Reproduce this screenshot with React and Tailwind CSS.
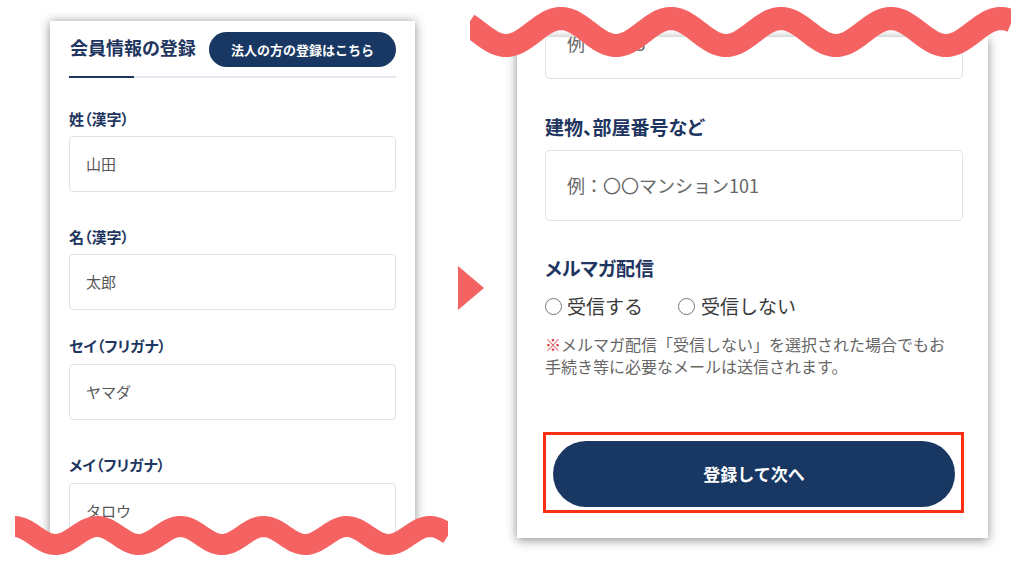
const LEFT_FIELDS = [
  { label: "姓（漢字）", value: "山田", gap: "mt-[31px]", inGap: "mt-[7px]" },
  { label: "名（漢字）", value: "太郎", gap: "mt-[35px]", inGap: "mt-[7px]" },
  { label: "セイ（フリガナ）", value: "ヤマダ", gap: "mt-[26px]", inGap: "mt-[8px]" },
  { label: "メイ（フリガナ）", value: "タロウ", gap: "mt-[35px]", inGap: "mt-[8px]" },
];

// sine wave used for the "cut" marks
function wavePoints(width, mid, amp, period, x0) {
  let d = "";
  for (let x = -2; x <= width + 2; x += 2) {
    const y = mid - amp * Math.cos((2 * Math.PI * (x - x0)) / period);
    d += (d ? " L" : "M") + x.toFixed(1) + " " + y.toFixed(2);
  }
  return d;
}

function Wave({ className, width, height, mid, amp, period, x0, stroke, side }) {
  const line = wavePoints(width, mid, amp, period, x0);
  const edge = side === "below" ? height + 2 : -2;
  const fill = `${line} L${width + 2} ${edge} L-2 ${edge} Z`;
  return (
    <svg className={className} width={width} height={height} viewBox={`0 0 ${width} ${height}`}>
      <path d={fill} fill="#ffffff" />
      <path d={line} fill="none" stroke="#f56262" strokeWidth={stroke} />
    </svg>
  );
}

export default function App() {
  return (
    <div className="w-[1024px] h-[576px] overflow-hidden bg-white flex items-start font-['Noto_Sans_CJK_JP',sans-serif]">
      {/* ── Left: form start ───────────────────────────────────── */}
      <div className="relative ml-[15px] w-[433px] h-[576px] shrink-0">
        <div className="mt-[21px] ml-[35px] w-[365px] h-[540px] overflow-hidden bg-white shadow-[0_1px_10px_rgba(0,0,0,0.45)] px-[19px] pt-[11px]">
          <div className="flex items-center justify-between">
            <h1 className="pl-px pb-[6px] text-[18px] leading-[26px] font-bold text-[#1e3560] [font-feature-settings:'palt']">
              会員情報の登録
            </h1>
            <button className="w-[187px] h-[35px] rounded-full bg-[#183863] text-white text-[13px] font-bold">
              法人の方の登録はこちら
            </button>
          </div>
          <div className="mt-[9px] flex h-[2px]">
            <div className="w-[65px] bg-[#1e3560]" />
            <div className="flex-1 bg-[#e4e8ee]" />
          </div>
          {LEFT_FIELDS.map((f) => (
            <div key={f.label} className={f.gap}>
              <div className="text-[15px] leading-[20px] font-bold text-[#1e3560] [font-feature-settings:'palt']">
                {f.label}
              </div>
              <div
                className={`${f.inGap} h-[56px] rounded-[4px] border border-[#dde3ea] flex items-center pl-[16px] text-[15px] text-[#555]`}
              >
                {f.value}
              </div>
            </div>
          ))}
        </div>
        <Wave
          className="absolute left-0 top-[500px]"
          width={433}
          height={76}
          mid={35.5}
          amp={9}
          period={83.2}
          x0={-1}
          stroke={21}
          side="below"
        />
      </div>

      {/* ── Arrow ──────────────────────────────────────────────── */}
      <div className="ml-[10px] mt-[266px] w-[26px] h-[44px] shrink-0">
        <svg width="26" height="44" viewBox="0 0 26 44">
          <polygon points="0,0 26,22 0,44" fill="#f56262" />
        </svg>
      </div>

      {/* ── Right: form end ────────────────────────────────────── */}
      <div className="relative w-[527px] h-[576px] shrink-0">
        <div className="mt-[37px] ml-[33px] w-[471px] overflow-hidden bg-white shadow-[0_2px_10px_rgba(0,0,0,0.45)] pl-[28px] pr-[25px] pb-[25px]">
          <div className="-mt-[29px] h-[71px] rounded-[5px] border border-[#dde3ea] flex items-center pl-[21px] text-[18px] text-[#666]">
            例：1-2-3
          </div>

          <div className="mt-[35px] text-[19px] leading-[26px] font-bold text-[#1e3560] [font-feature-settings:'palt']">
            建物、部屋番号など
          </div>
          <div className="mt-[10px] h-[71px] rounded-[5px] border border-[#dde3ea] flex items-center pl-[21px] text-[18px] text-[#666]">
            例：〇〇マンション101
          </div>

          <div className="mt-[34px] text-[19px] leading-[26px] font-bold text-[#1e3560] [font-feature-settings:'palt']">
            メルマガ配信
          </div>
          <div className="mt-[12px] h-[26px] flex items-center text-[19px] text-[#3a3a3a]">
            <label className="flex items-center">
              <span className="w-[17px] h-[17px] rounded-full border-[1.5px] border-[#7a7a7a]" />
              <span className="ml-[5px]">受信する</span>
            </label>
            <label className="ml-[35px] flex items-center">
              <span className="w-[17px] h-[17px] rounded-full border-[1.5px] border-[#7a7a7a]" />
              <span className="ml-[6px]">受信しない</span>
            </label>
          </div>
          <p className="mt-[14px] text-[16px] leading-[22px] text-[#666]">
            <span className="text-[#e2343c]">※</span>メルマガ配信「受信しない」を選択された場合でもお
            <br />
            手続き等に必要なメールは送信されます。
          </p>

          <div className="mt-[55px] -ml-[2px] w-[421px] h-[81px] border-[3px] border-[#fa2f14] pt-[6px] pl-[7px] pr-[6px] pb-[3px]">
            <button className="w-full h-full rounded-full bg-[#183863] text-white text-[17px] font-bold">
              登録して次へ
            </button>
          </div>
        </div>
        <Wave
          className="absolute left-[-14px] top-0"
          width={541}
          height={70}
          mid={32}
          amp={13.5}
          period={110}
          x0={-19}
          stroke={23}
          side="above"
        />
      </div>
    </div>
  );
}
